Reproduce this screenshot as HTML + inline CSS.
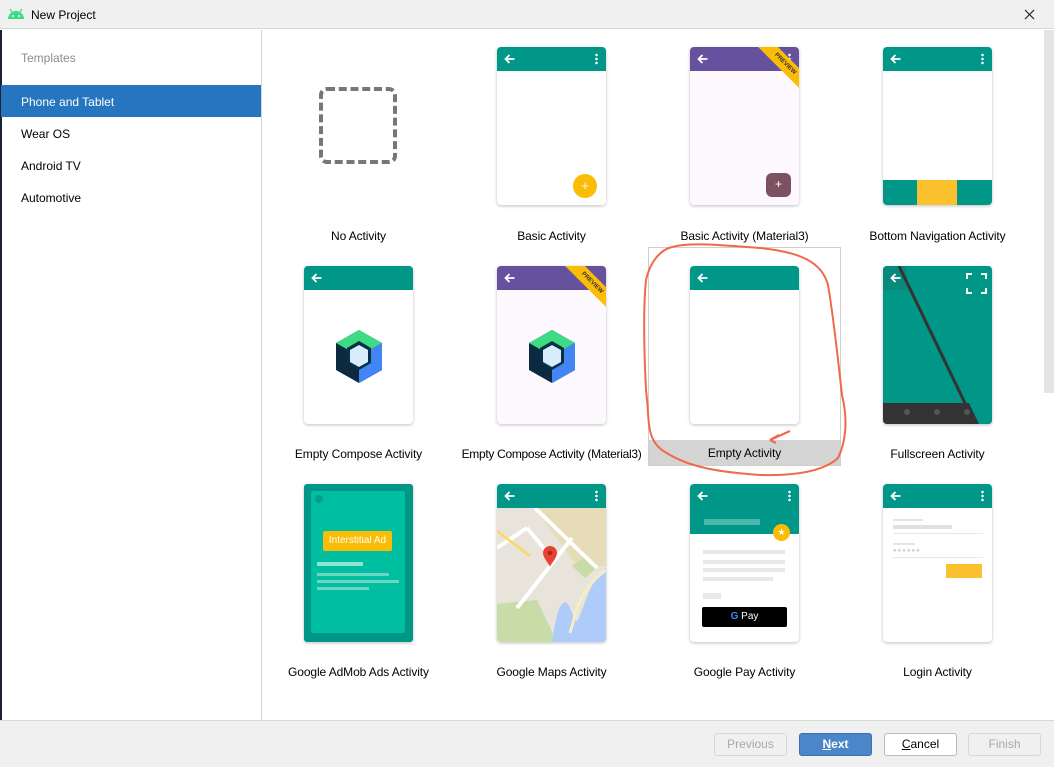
<!DOCTYPE html>
<html><head><meta charset="utf-8"><style>
*{margin:0;padding:0;box-sizing:border-box}
body{width:1054px;height:767px;position:relative;overflow:hidden;background:#fff;font-family:"Liberation Sans",sans-serif;font-size:12px;color:#000}
.abs{position:absolute}
.card{position:absolute;width:109px;height:158px;background:#fff;border-radius:4px;box-shadow:0 1px 3px rgba(0,0,0,.25);overflow:hidden}
.tb{position:absolute;left:0;top:0;width:100%;height:24px;background:#009688}
.tb.p{background:#66519f}
.arr{position:absolute;left:7px;top:7px;width:11px;height:10px}
.dots{position:absolute;right:8px;top:6px;width:3px;height:12px;background:radial-gradient(circle,#fff 1.2px,transparent 1.4px) 0 0/3px 4px}
.lbl{position:absolute;width:193px;text-align:center;font-size:12px;letter-spacing:-0.1px}
.btn{position:absolute;top:733px;height:23px;width:73px;border:1px solid #ccc;border-radius:3px;text-align:center;line-height:21px;font-size:12px}
.ribbon{position:absolute;right:-22px;top:10px;width:72px;height:14px;background:#fbbc05;transform:rotate(45deg);font-size:6px;font-weight:bold;text-align:center;line-height:14px;color:#333}
</style></head><body>
<svg width="0" height="0" style="position:absolute"><defs><symbol id="ar" viewBox="0 0 11 10"><path d="M10.5 5H1.5M5.5 1L1.5 5L5.5 9" stroke="#fff" stroke-width="1.8" fill="none"/></symbol></defs></svg>
<div class="abs" style="left:0;top:0;width:1054px;height:29px;background:#f0f0f0;border-bottom:1px solid #d8d8d8"></div>
<svg class="abs" style="left:7px;top:8px" width="18" height="12" viewBox="0 0 18 12"><path d="M1 11 A8 8 0 0 1 17 11 Z" fill="#3ddc84"/><line x1="3" y1="1" x2="5" y2="4" stroke="#3ddc84" stroke-width="1.2"/><line x1="15" y1="1" x2="13" y2="4" stroke="#3ddc84" stroke-width="1.2"/><circle cx="6" cy="8" r="1" fill="#fff"/><circle cx="12" cy="8" r="1" fill="#fff"/></svg>
<div class="abs" style="left:31px;top:8px;font-size:12px">New Project</div>
<svg class="abs" style="left:1024px;top:9px" width="11" height="11"><path d="M1 1L10 10M10 1L1 10" stroke="#222" stroke-width="1.2"/></svg>
<div class="abs" style="left:0;top:30px;width:2px;height:690px;background:#1a1f3a"></div>
<div class="abs" style="left:261px;top:30px;width:1px;height:690px;background:#d4d4d4"></div>
<div class="abs" style="left:21px;top:51px;color:#8c8c8c">Templates</div>
<div class="abs" style="left:1px;top:85px;width:260px;height:32px;background:#2675bf"></div>
<div class="abs" style="left:21px;top:95px;color:#fff">Phone and Tablet</div>
<div class="abs" style="left:21px;top:127px">Wear OS</div>
<div class="abs" style="left:21px;top:159px">Android TV</div>
<div class="abs" style="left:21px;top:191px">Automotive</div>
<div class="abs" style="left:1044px;top:30px;width:10px;height:363px;background:#e4e4e4"></div>

<div class="abs" style="left:319px;top:87px;width:78px;height:77px;border:4px dashed #777;border-radius:8px"></div>
<div class="lbl" style="left:262px;top:229px">No Activity</div>

<div class="card" style="left:497px;top:47px"><div class="tb"><svg class="arr"><use href="#ar"/></svg><span class="dots"></span></div>
<div class="abs" style="left:76px;top:127px;width:24px;height:24px;border-radius:50%;background:#fbbc05;color:#fff;text-align:center;line-height:23px;font-size:13px">+</div></div>
<div class="lbl" style="left:455px;top:229px">Basic Activity</div>

<div class="card" style="left:690px;top:47px;background:#fdf8fd"><div class="tb p"><svg class="arr"><use href="#ar"/></svg><span class="dots"></span></div><div class="ribbon">PREVIEW</div>
<div class="abs" style="left:76px;top:126px;width:25px;height:24px;border-radius:6px;background:#7d5260;color:#fff;text-align:center;line-height:23px;font-size:12px">+</div></div>
<div class="lbl" style="left:648px;top:229px">Basic Activity (Material3)</div>

<div class="card" style="left:883px;top:47px"><div class="tb"><svg class="arr"><use href="#ar"/></svg><span class="dots"></span></div>
<div class="abs" style="left:0;top:133px;width:109px;height:25px;background:#009688"></div>
<div class="abs" style="left:34px;top:133px;width:40px;height:25px;background:#fbc02d"></div></div>
<div class="lbl" style="left:841px;top:229px">Bottom Navigation Activity</div>

<div class="card" style="left:304px;top:266px"><div class="tb"><svg class="arr"><use href="#ar"/></svg></div>
<svg class="abs" style="left:30px;top:63px" width="50" height="55" viewBox="0 0 50 55"><polygon points="25,1 48,14 48,41 25,54 2,41 2,14" fill="#0b2a3f"/><polygon points="25,1 48,14 25,27 2,14" fill="#3ddc84"/><polygon points="48,14 48,41 25,54 25,27" fill="#4285f4"/><polygon points="25,12 37,19 37,34 25,41 13,34 13,19" fill="#083042"/><polygon points="25,16 34,21 34,33 25,38 16,33 16,21" fill="#d8ecfb"/></svg></div>
<div class="lbl" style="left:262px;top:447px">Empty Compose Activity</div>

<div class="card" style="left:497px;top:266px;background:#fdf8fd"><div class="tb p"><svg class="arr"><use href="#ar"/></svg></div><div class="ribbon">PREVIEW</div>
<svg class="abs" style="left:30px;top:63px" width="50" height="55" viewBox="0 0 50 55"><polygon points="25,1 48,14 48,41 25,54 2,41 2,14" fill="#0b2a3f"/><polygon points="25,1 48,14 25,27 2,14" fill="#3ddc84"/><polygon points="48,14 48,41 25,54 25,27" fill="#4285f4"/><polygon points="25,12 37,19 37,34 25,41 13,34 13,19" fill="#083042"/><polygon points="25,16 34,21 34,33 25,38 16,33 16,21" fill="#d8ecfb"/></svg></div>
<div class="lbl" style="left:455px;top:447px;letter-spacing:-0.3px">Empty Compose Activity (Material3)</div>

<div class="abs" style="left:648px;top:247px;width:193px;height:219px;border:1px solid #cfcfcf"></div>
<div class="abs" style="left:649px;top:440px;width:191px;height:25px;background:#d4d4d4"></div>
<div class="card" style="left:690px;top:266px"><div class="tb"><svg class="arr"><use href="#ar"/></svg></div></div>
<div class="lbl" style="left:648px;top:446px">Empty Activity</div>

<div class="card" style="left:883px;top:266px;background:#009688">
<svg class="abs" style="left:0;top:0" width="109" height="158"><rect x="0" y="137" width="109" height="21" fill="#333"/><polygon points="86,137 109,137 109,158 96,158" fill="#009688"/><rect x="0" y="0" width="24" height="24" fill="#0e8074" opacity=".6"/><line x1="16" y1="0" x2="92" y2="158" stroke="#333" stroke-width="3"/><circle cx="24" cy="146" r="3" fill="#555"/><circle cx="54" cy="146" r="3" fill="#555"/><circle cx="84" cy="146" r="3" fill="#555"/><path d="M84 13V8H89M98 8H103V13M103 22V27H98M89 27H84V22" stroke="#fff" stroke-width="2" fill="none"/></svg>
<svg class="arr"><use href="#ar"/></svg></div>
<div class="lbl" style="left:841px;top:447px">Fullscreen Activity</div>

<div class="card" style="left:304px;top:484px;background:#009688;border-radius:3px">
<div class="abs" style="left:7px;top:7px;width:94px;height:142px;background:#00bfa0;border-radius:2px"></div>
<div class="abs" style="left:11px;top:11px;width:8px;height:8px;border-radius:50%;background:#00a08a"></div>
<div class="abs" style="left:19px;top:47px;width:69px;height:20px;background:#fbbc05;border-radius:2px;color:#fff;font-size:10px;text-align:center;line-height:20px">Interstitial Ad</div>
<div class="abs" style="left:13px;top:78px;width:46px;height:4px;background:#8fe3d3"></div>
<div class="abs" style="left:13px;top:89px;width:72px;height:3px;background:#6dd6c2"></div>
<div class="abs" style="left:13px;top:96px;width:82px;height:3px;background:#6dd6c2"></div>
<div class="abs" style="left:13px;top:103px;width:52px;height:3px;background:#6dd6c2"></div></div>
<div class="lbl" style="left:262px;top:665px">Google AdMob Ads Activity</div>

<div class="card" style="left:497px;top:484px"><div class="tb"><svg class="arr"><use href="#ar"/></svg><span class="dots"></span></div>
<svg class="abs" style="left:0;top:24px" width="109" height="134"><rect width="109" height="134" fill="#e8e4dc"/><polygon points="38,0 109,0 109,58 80,58" fill="#e6dcb8"/><polygon points="75,58 86,50 100,60 88,70" fill="#c8dca8"/><polygon points="0,96 40,92 60,134 0,134" fill="#c8dca8"/><path d="M109 60 C95 70 90 90 82 110 C78 120 75 100 70 95 C62 90 58 115 55 134 L109 134 Z" fill="#aecbfa"/><path d="M109 62 Q90 75 80 100 Q76 115 73 125" stroke="#f4efc3" stroke-width="3" fill="none"/><path d="M38 0 L100 60 M0 40 L30 20 M30 20 L55 50 M75 30 L20 100" stroke="#fff" stroke-width="4" fill="none"/><path d="M0 23 L33 48" stroke="#fdd663" stroke-width="2.5"/><path d="M53 38 a7 7 0 0 1 7 7 c0 5 -7 12 -7 14 c0 -2 -7 -9 -7 -14 a7 7 0 0 1 7 -7z" fill="#e94235"/><circle cx="53" cy="45" r="2.3" fill="#a52714"/></svg></div>
<div class="lbl" style="left:455px;top:665px">Google Maps Activity</div>

<div class="card" style="left:690px;top:484px"><div class="tb" style="height:50px"><svg class="arr"><use href="#ar"/></svg><span class="dots"></span>
<div class="abs" style="left:14px;top:35px;width:56px;height:6px;background:#4db6ac"></div></div>
<div class="abs" style="left:83px;top:40px;width:17px;height:17px;border-radius:50%;background:#fbbc05;color:#fff;font-size:9px;text-align:center;line-height:17px">★</div>
<div class="abs" style="left:13px;top:66px;width:82px;height:4px;background:#e8e8e8"></div>
<div class="abs" style="left:13px;top:76px;width:82px;height:4px;background:#e8e8e8"></div>
<div class="abs" style="left:13px;top:84px;width:82px;height:4px;background:#e8e8e8"></div>
<div class="abs" style="left:13px;top:93px;width:70px;height:4px;background:#e8e8e8"></div>
<div class="abs" style="left:13px;top:109px;width:18px;height:6px;background:#e8e8e8"></div>
<div class="abs" style="left:12px;top:123px;width:85px;height:20px;background:#000;border-radius:2px;color:#fff;font-size:10px;text-align:center;line-height:20px"><b style="color:#4285f4">G</b> Pay</div></div>
<div class="lbl" style="left:648px;top:665px">Google Pay Activity</div>

<div class="card" style="left:883px;top:484px"><div class="tb"><svg class="arr"><use href="#ar"/></svg><span class="dots"></span></div>
<div class="abs" style="left:10px;top:35px;width:30px;height:2px;background:#e4e4e4"></div>
<div class="abs" style="left:10px;top:41px;width:59px;height:4px;background:#e0e0e0"></div>
<div class="abs" style="left:10px;top:49px;width:90px;height:1px;background:#e8e8e8"></div>
<div class="abs" style="left:10px;top:59px;width:22px;height:2px;background:#e4e4e4"></div>
<div class="abs" style="left:10px;top:64px;font-size:6px;color:#ccc;letter-spacing:1px">●●●●●●</div>
<div class="abs" style="left:10px;top:73px;width:90px;height:1px;background:#e8e8e8"></div>
<div class="abs" style="left:63px;top:80px;width:36px;height:14px;background:#fbc02d"></div></div>
<div class="lbl" style="left:841px;top:665px">Login Activity</div>

<svg class="abs" style="left:0;top:0" width="1054" height="767"><path d="M672 247 C690 242 720 245 760 248 C800 252 822 262 828 285 C834 320 838 360 842 395 C848 420 846 442 838 458 C825 470 800 476 760 475 C720 472 690 468 665 452 C645 440 650 420 646 390 C644 350 643 310 646 280 C650 262 660 250 672 247 Z" stroke="#f06a4a" stroke-width="2" fill="none"/><path d="M790 431 L770 440 M770 440 L779 435 M770 440 L776 443" stroke="#f06a4a" stroke-width="2.2" fill="none"/></svg>

<div class="abs" style="left:0;top:720px;width:1054px;height:47px;background:#f0f0f0;border-top:1px solid #d8d8d8"></div>
<div class="btn" style="left:714px;color:#a8a8a8;background:#f0f0f0;border-color:#d8d8d8">Previous</div>
<div class="btn" style="left:799px;background:#4a86c8;border-color:#3a70b0;color:#fff;font-weight:bold"><u>N</u>ext</div>
<div class="btn" style="left:884px;background:#fff;border-color:#bbb"><u>C</u>ancel</div>
<div class="btn" style="left:968px;color:#a8a8a8;background:#f0f0f0;border-color:#d8d8d8">Finish</div>
</body></html>
